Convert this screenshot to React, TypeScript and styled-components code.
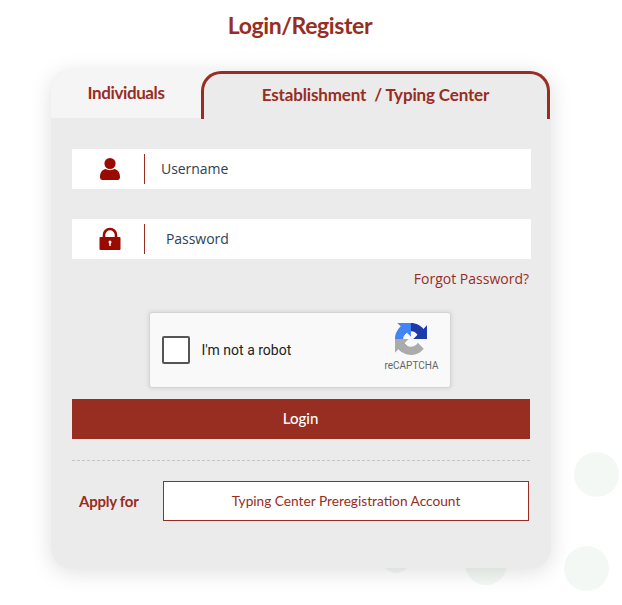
import React from "react";
import styled, { createGlobalStyle } from "styled-components";

const GlobalStyle = createGlobalStyle`
  html, body {
    margin: 0;
    padding: 0;
    background: #fff;
    font-family: "Lato", "Liberation Sans", sans-serif;
  }
  * {
    box-sizing: border-box;
  }
`;

const Page = styled.div`
  position: relative;
  width: 622px;
  height: 605px;
  overflow: hidden;
`;

const Column = styled.div`
  position: relative;
  width: 602px;
  display: flex;
  flex-direction: column;
  align-items: center;
`;

const Title = styled.h1`
  margin: 0 2px 0 0;
  height: 70px;
  padding-top: 10px;
  font-size: 23px;
  line-height: 30px;
  letter-spacing: -0.4px;
  font-weight: 700;
  color: #982d22;
`;

const Dot = styled.span<{ $x: number; $y: number; $size: number }>`
  position: absolute;
  left: ${(p) => p.$x}px;
  top: ${(p) => p.$y}px;
  width: ${(p) => p.$size}px;
  height: ${(p) => p.$size}px;
  border-radius: 50%;
  background: #f4f8f5;
`;

const Card = styled.div`
  position: relative;
  width: 500px;
  height: 498px;
  border-radius: 20px;
  background: #ebebeb;
  box-shadow: 0 4px 22px rgba(0, 0, 0, 0.13);
  overflow: hidden;
`;

const Tabs = styled.div`
  display: flex;
  height: 49px;
  padding-top: 1px;
  background: linear-gradient(#f5f5f5 48px, #ebebeb 48px);
`;

const TabLeft = styled.div`
  width: 150px;
  height: 47px;
  display: flex;
  align-items: center;
  justify-content: center;
  padding-bottom: 4px;
  font-size: 17px;
  letter-spacing: -0.4px;
  font-weight: 700;
  color: #982d22;
`;

const TabRight = styled.div`
  width: 349px;
  height: 48px;
  display: flex;
  align-items: center;
  justify-content: center;
  padding-bottom: 4px;
  background: #ebebeb;
  border: 3px solid #982d22;
  border-bottom: 0;
  border-radius: 20px 20px 0 0;
  font-size: 17px;
  letter-spacing: -0.15px;
  font-weight: 700;
  color: #982d22;
  white-space: pre;
`;

const Form = styled.div`
  display: flex;
  flex-direction: column;
  padding: 30px 20px 0 21px;
`;

const Field = styled.div<{ $gap?: number }>`
  display: flex;
  align-items: center;
  width: 459px;
  height: 40px;
  margin-bottom: ${(p) => p.$gap ?? 0}px;
  background: #fff;
`;

const IconSlot = styled.div`
  flex: none;
  width: 73px;
  height: 30px;
  display: flex;
  align-items: center;
  justify-content: center;
  padding-left: 3px;
  border-right: 1px solid #982d22;
`;

const TextInput = styled.input<{ $indent: number }>`
  flex: 1;
  min-width: 0;
  height: 100%;
  border: 0;
  outline: 0;
  background: transparent;
  padding: 0 0 2px ${(p) => p.$indent}px;
  font-family: "Open Sans", "Liberation Sans", sans-serif;
  font-size: 14px;
  letter-spacing: -0.05px;
  color: #2b4257;

  &::placeholder {
    color: #2b4257;
    opacity: 1;
  }
`;

const ForgotRow = styled.div`
  display: flex;
  justify-content: flex-end;
  width: 457px;
  height: 53px;
  padding-top: 10px;
`;

const ForgotLink = styled.a`
  font-family: "Open Sans", "Liberation Sans", sans-serif;
  font-size: 14px;
  line-height: 20px;
  color: #982d22;
`;

const Captcha = styled.div`
  align-self: center;
  width: 302px;
  height: 76px;
  margin-left: -4px;
  display: flex;
  align-items: center;
  padding: 0 10px 0 12px;
  background: #f9f9f9;
  border: 1px solid #d3d3d3;
  border-radius: 3px;
  box-shadow: 0 0 4px 1px rgba(0, 0, 0, 0.08);
`;

const CaptchaBox = styled.span`
  flex: none;
  width: 28px;
  height: 28px;
  background: #fff;
  border: 2px solid #555;
  border-radius: 2px;
`;

const CaptchaLabel = styled.span`
  flex: 1;
  padding-left: 12px;
  font-family: "Roboto", "Liberation Sans", sans-serif;
  font-size: 14px;
  color: #222;
`;

const CaptchaBrand = styled.div`
  width: 56px;
  display: flex;
  flex-direction: column;
  align-items: center;
  gap: 5px;
  padding-bottom: 5px;
  font-family: "Roboto", "Liberation Sans", sans-serif;
  font-size: 10px;
  line-height: 12px;
  color: #666;

  svg {
    margin-left: -2px;
  }
`;

const LoginButton = styled.button`
  width: 458px;
  height: 40px;
  margin-top: 11px;
  padding: 0 1px 2px 0;
  border: 0;
  background: #982d22;
  color: #fff;
  font-family: "Lato", "Liberation Sans", sans-serif;
  font-size: 15px;
  font-weight: 500;
`;

const Rule = styled.hr`
  width: 458px;
  margin: 21px 0 20px;
  border: 0;
  border-top: 1px dashed #c4c4c4;
`;

const ApplyRow = styled.div`
  display: flex;
  align-items: center;
  width: 457px;
`;

const ApplyLabel = styled.span`
  width: 91px;
  padding-left: 7px;
  font-size: 15px;
  letter-spacing: -0.25px;
  font-weight: 700;
  color: #982d22;
`;

const ApplyButton = styled.button`
  width: 366px;
  height: 40px;
  padding: 0 0 2px;
  border: 1px solid #982d22;
  background: #fff;
  color: #982d22;
  font-family: "Lato", "Liberation Sans", sans-serif;
  font-size: 13.7px;
`;

const UserIcon = () => (
  <svg width="22" height="24" viewBox="0 0 22 24" fill="#990a00">
    <circle cx="11" cy="6.500" r="5.600" />
    <path d="M1 20c0-5 2.500-7.500 6-8 1 1.500 7 1.500 8 0 3.500.5 6 3 6 8 0 2-1 3-2.500 3h-15C2 23 1 22 1 20z" />
  </svg>
);

const LockIcon = () => (
  <svg width="22" height="24" viewBox="0 0 22 24">
    <path d="M5 11V8a6 6 0 0 1 12 0v3" fill="none" stroke="#990a00" strokeWidth="2.600" />
    <rect x="0.500" y="10" width="21" height="13" rx="1" fill="#990a00" />
    <circle cx="11" cy="15" r="1.500" fill="#fff" />
    <rect x="10.300" y="15" width="1.400" height="4" fill="#fff" />
  </svg>
);

const RecaptchaIcon = () => (
  <svg width="32" height="32" viewBox="0 0 64 64">
    <path
      fill="#1c3aa9"
      d="M64 31.955l-.033-1.370V4.687l-7.160 7.160C50.948 4.674 42.033.093 32.050.093c-10.400 0-19.622 4.960-25.458 12.640l11.736 11.860a15.550 15.550 0 0 1 4.754-5.334c2.050-1.600 4.952-2.906 8.968-2.906.485 0 .86.057 1.135.163 4.976.393 9.290 3.140 11.830 7.125l-8.307 8.307c10.523-.04 22.400-.066 28.940.002"
    />
    <path
      fill="#4285f4"
      d="M31.862 0l-1.370.033H4.594l7.160 7.160C4.580 13.052 0 21.967 0 31.950c0 10.400 4.960 19.622 12.640 25.458l11.860-11.736a15.550 15.550 0 0 1-5.334-4.754c-1.600-2.050-2.906-4.952-2.906-8.968 0-.485.057-.86.163-1.135.393-4.976 3.140-9.290 7.125-11.830l8.307 8.307c-.04-10.523-.066-22.400.002-28.940"
    />
    <path
      fill="#ababab"
      d="M.001 32.045l.033 1.370v25.898l7.160-7.160c5.860 7.173 14.775 11.754 24.760 11.754 10.400 0 19.622-4.960 25.458-12.640l-11.736-11.860a15.550 15.550 0 0 1-4.754 5.334c-2.050 1.600-4.952 2.906-8.968 2.906-.485 0-.86-.057-1.135-.163-4.976-.393-9.290-3.140-11.830-7.125l8.307-8.307c-10.523.04-22.400.066-28.940-.002"
    />
  </svg>
);

const App = () => {
  return (
    <Page>
      <GlobalStyle />
      <Dot $x={574} $y={452} $size={45} />
      <Dot $x={564} $y={546} $size={45} />
      <Dot $x={465} $y={543} $size={42} />
      <Dot $x={382} $y={545} $size={28} />
      <Column>
        <Title>Login/Register</Title>
        <Card>
          <Tabs>
            <TabLeft>Individuals</TabLeft>
            <TabRight>Establishment  / Typing Center</TabRight>
          </Tabs>
          <Form>
            <Field $gap={30}>
              <IconSlot>
                <UserIcon />
              </IconSlot>
              <TextInput $indent={16} placeholder="Username" />
            </Field>
            <Field>
              <IconSlot>
                <LockIcon />
              </IconSlot>
              <TextInput $indent={21} placeholder="Password" />
            </Field>
            <ForgotRow>
              <ForgotLink>Forgot Password?</ForgotLink>
            </ForgotRow>
            <Captcha>
              <CaptchaBox />
              <CaptchaLabel>I'm not a robot</CaptchaLabel>
              <CaptchaBrand>
                <RecaptchaIcon />
                reCAPTCHA
              </CaptchaBrand>
            </Captcha>
            <LoginButton>Login</LoginButton>
            <Rule />
            <ApplyRow>
              <ApplyLabel>Apply for</ApplyLabel>
              <ApplyButton>Typing Center Preregistration Account</ApplyButton>
            </ApplyRow>
          </Form>
        </Card>
      </Column>
    </Page>
  );
};

export default App;
